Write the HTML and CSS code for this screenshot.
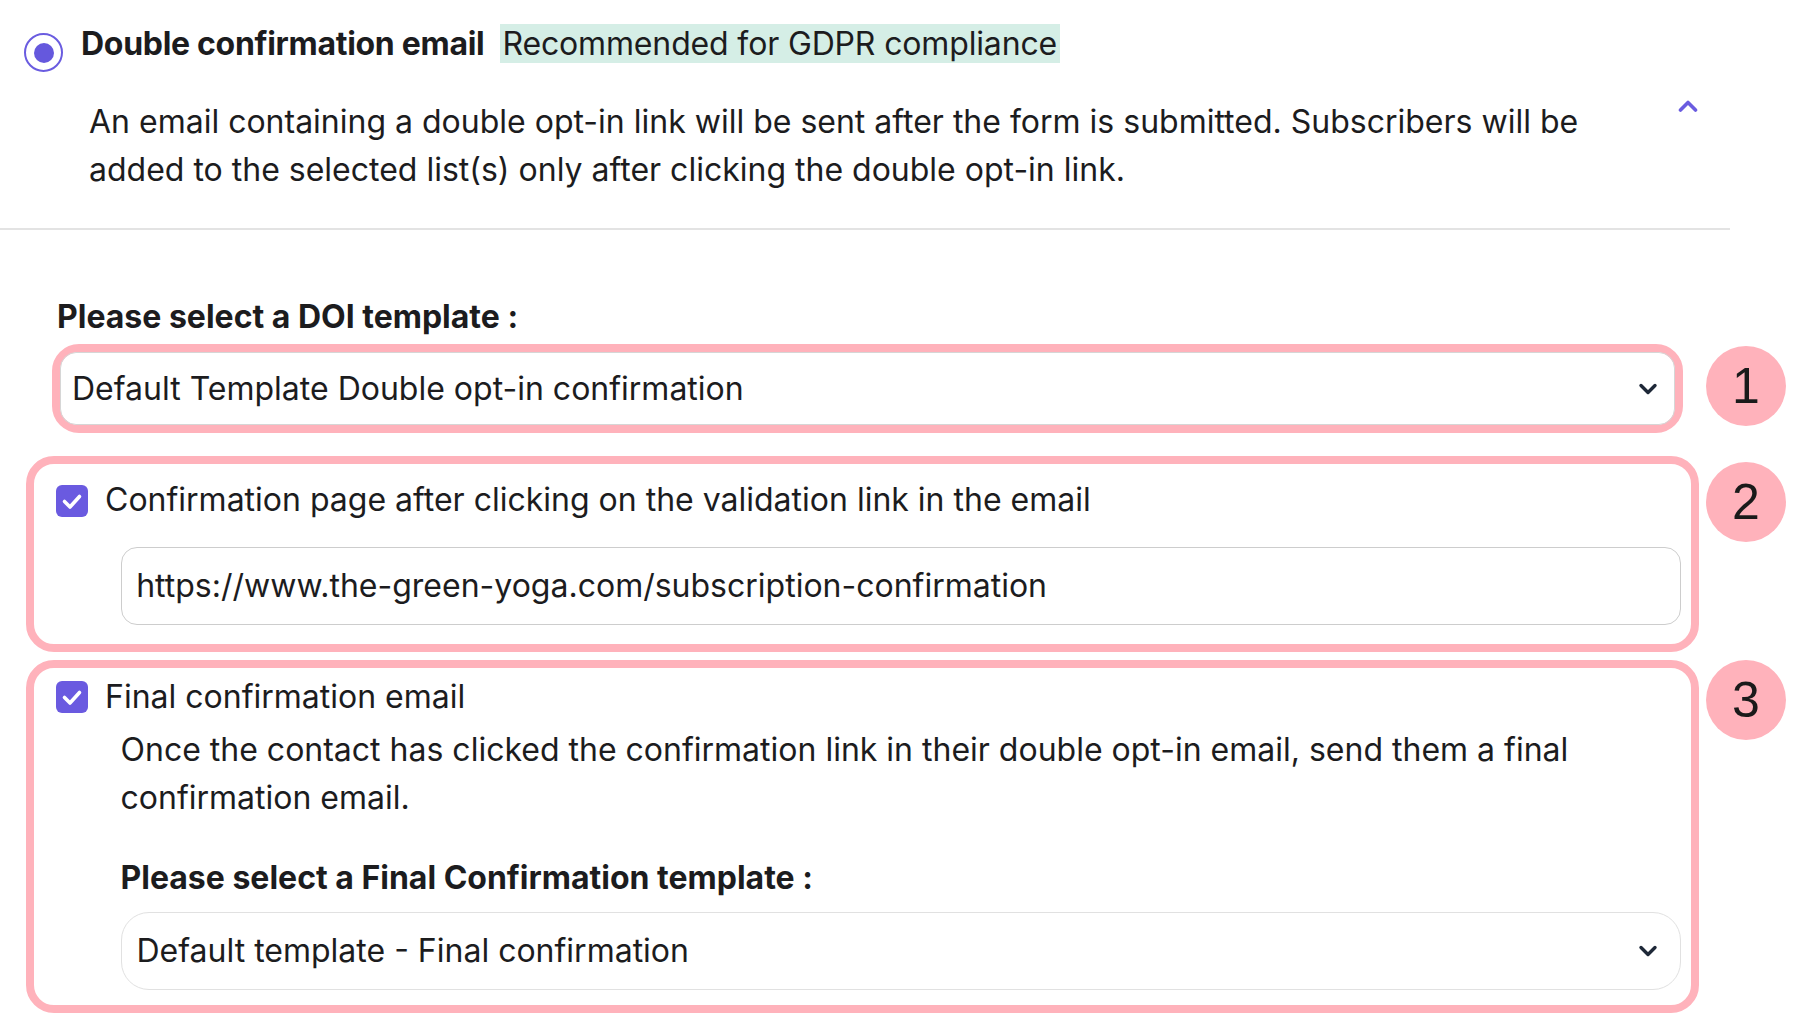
FILE: index.html
```html
<!DOCTYPE html>
<html lang="en">
<head>
    <meta charset="UTF-8">
    <meta name="viewport" content="width=device-width, initial-scale=1.0">
    <title>Double opt-in settings</title>
    <link rel="stylesheet" href="styles.css">
</head>
<body>
    <div class="doi-option">
        <div class="option-head">
            <span class="radio checked"></span>
            <span class="option-title">Double confirmation email</span>
            <span class="badge">Recommended for GDPR compliance</span>
        </div>
        <div class="option-desc">
            <p>An email containing a double opt-in link will be sent after the form is submitted. Subscribers will be added to the selected list(s) only after clicking the double opt-in link.</p>
            <svg class="collapse" width="20" height="13" viewBox="0 0 20 13">
                <path d="M2.5 11 L10 3.5 L17.5 11" fill="none" stroke="#6a5ce0" stroke-width="3.6" stroke-linecap="round" stroke-linejoin="round"/>
            </svg>
        </div>
    </div>

    <div class="doi-settings">
        <div class="field-label first">Please select a DOI template :</div>

        <div class="step step-1">
            <div class="frame">
                <div class="select">
                    <span>Default Template Double opt-in confirmation</span>
                    <svg width="20" height="12" viewBox="0 0 20 12">
                        <path d="M3 2.5 L10 9.5 L17 2.5" fill="none" stroke="#1e2838" stroke-width="3.4" stroke-linecap="round" stroke-linejoin="round"/>
                    </svg>
                </div>
            </div>
            <div class="step-num">1</div>
        </div>

        <div class="step step-2">
            <div class="frame">
                <div class="check-row">
                    <span class="checkbox">
                        <svg width="32" height="32" viewBox="0 0 32 32">
                            <path d="M8.5 16.5 L14 22 L23.5 11.5" fill="none" stroke="#fff" stroke-width="3.6" stroke-linecap="round" stroke-linejoin="round"/>
                        </svg>
                    </span>
                    <span class="check-label">Confirmation page after clicking on the validation link in the email</span>
                </div>
                <div class="text-input">https://www.the-green-yoga.com/subscription-confirmation</div>
            </div>
            <div class="step-num">2</div>
        </div>

        <div class="step step-3">
            <div class="frame">
                <div class="check-row">
                    <span class="checkbox">
                        <svg width="32" height="32" viewBox="0 0 32 32">
                            <path d="M8.5 16.5 L14 22 L23.5 11.5" fill="none" stroke="#fff" stroke-width="3.6" stroke-linecap="round" stroke-linejoin="round"/>
                        </svg>
                    </span>
                    <span class="check-label">Final confirmation email</span>
                </div>
                <p class="sub-desc">Once the contact has clicked the confirmation link in their double opt-in email, send them a final confirmation email.</p>
                <div class="field-label inner">Please select a Final Confirmation template :</div>
                <div class="select pill">
                    <span>Default template - Final confirmation</span>
                    <svg width="20" height="12" viewBox="0 0 20 12">
                        <path d="M3 2.5 L10 9.5 L17 2.5" fill="none" stroke="#1e2838" stroke-width="3.4" stroke-linecap="round" stroke-linejoin="round"/>
                    </svg>
                </div>
            </div>
            <div class="step-num">3</div>
        </div>
    </div>
</body>
</html>
```
FILE: styles.css
```css
body {
    margin: 0;
    background-color: #fff;
    font-family: Inter, 'Noto Sans', sans-serif;
    font-size: 32px;
    color: #1c1c1e;
}
p {
    margin: 0;
}

/* option header */
.doi-option {
    width: 1730px;
    padding: 24px 0 34px;
    border-bottom: 2px solid #e3e3e3;
}
.option-head {
    display: flex;
    align-items: flex-start;
    height: 39px;
    line-height: 39px;
}
.radio {
    width: 39px;
    height: 39px;
    margin: 9px 0 0 24px;
    box-sizing: border-box;
    border: 2.5px solid #6a5ce0;
    border-radius: 50%;
    display: flex;
    justify-content: center;
    align-items: center;
}
.radio.checked::after {
    content: '';
    width: 20px;
    height: 20px;
    border-radius: 50%;
    background-color: #6558dd;
}
.option-title {
    margin-left: 18px;
    font-weight: 700;
    letter-spacing: -0.3px;
}
.badge {
    margin-left: 16px;
    padding: 0 3px 0 2px;
    background-color: #d5eee6;
    letter-spacing: -0.15px;
}
.option-desc {
    display: flex;
    align-items: flex-start;
    margin-top: 35px;
    padding-left: 89px;
    line-height: 48px;
}
.option-desc p {
    width: 1551px;
}
.collapse {
    margin: 1px 32px 0 auto;
}

/* settings */
.doi-settings {
    padding: 63px 0 0 26px;
}
.field-label {
    font-weight: 700;
    line-height: 39px;
    padding-top: 3.5px;
}
.field-label.first {
    margin-left: 31px;
}
.step {
    display: flex;
    align-items: flex-start;
    gap: 7px;
}
.step-1 {
    margin-top: 8.5px;
}
.step-2 {
    margin-top: 23px;
}
.step-3 {
    margin-top: 8px;
}
.frame {
    width: 1673px;
    box-sizing: border-box;
    border: 8px solid #ffb2bb;
    border-radius: 28px;
}
.step-1 .frame {
    width: 1631px;
    margin: 0 16px 0 26px;
    border-radius: 27px;
}
.step-2 .frame {
    padding: 12.5px 10px 19px 0;
}
.step-3 .frame {
    padding: 6px 10px 15px 0;
}
.step-num {
    width: 80px;
    height: 80px;
    border-radius: 50%;
    background-color: #ffb2bb;
    display: flex;
    justify-content: center;
    align-items: center;
    font-family: 'Liberation Sans', Arial, sans-serif;
    font-size: 50px;
    color: #1a1a1a;
    margin-top: 2px;
}
.step-2 .step-num {
    margin-top: 6px;
}
.step-3 .step-num {
    margin-top: 0;
}

/* form controls */
.select {
    height: 73px;
    box-sizing: border-box;
    border: 1.5px solid #d6d6d6;
    border-radius: 16px;
    padding: 0 16px 0 11px;
    display: flex;
    justify-content: space-between;
    align-items: center;
}
.select.pill {
    height: 78px;
    margin-left: 86.5px;
    border-color: #e1e1e1;
    border-radius: 28px;
    padding: 0 22px 0 15px;
}
.check-row {
    display: flex;
    align-items: flex-start;
    height: 39px;
    line-height: 39px;
}
.check-label {
    padding-top: 3.5px;
}
.checkbox {
    width: 32px;
    height: 32px;
    margin: 8px 17px 0 22px;
    border-radius: 6px;
    background-color: #6a5ae0;
    display: flex;
}
.step-3 .checkbox {
    margin-top: 7.5px;
}
.text-input {
    height: 78px;
    margin: 31px 0 0 86.7px;
    box-sizing: border-box;
    border: 1.5px solid #cdcdcd;
    border-radius: 16px;
    padding-left: 14.5px;
    display: flex;
    align-items: center;
}
.sub-desc {
    margin: 13px 0 0 86.5px;
    line-height: 48px;
}
.field-label.inner {
    margin: 33px 0 0 86.5px;
}
.field-label.inner + .select {
    margin-top: 14.5px;
}
```
